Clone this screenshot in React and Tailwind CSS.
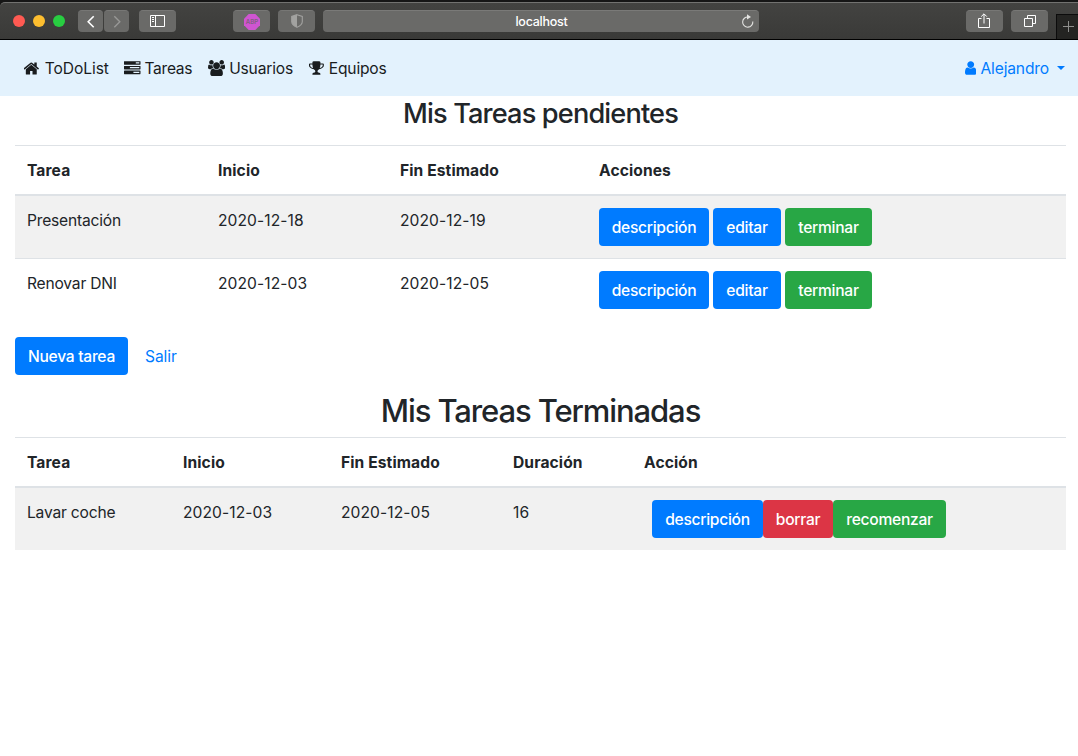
const ICONS = {
  home: ["64 0 1664 1792", "M1408 992v480q0 26-19 45t-45 19h-384v-384h-256v384h-384q-26 0-45-19t-19-45v-480q0-1 .5-3t.5-3l575-474 575 474q1 2 1 6zm223-69l-62 74q-8 9-21 11h-3q-13 0-21-7l-692-577-692 577q-12 8-24 7-13-2-21-11l-62-74q-8-10-7-23.5t11-21.5l719-599q32-26 76-26t76 26l244 204v-195q0-14 9-23t23-9h192q14 0 23 9t9 23v408l219 182q10 8 11 21.5t-7 23.5z"],
  tasks: ["0 0 1792 1792", "M1024 1408h640v-128h-640v128zm-384-512h1024v-128h-1024v128zm640-512h384v-128h-384v128zm512 832v256q0 26-19 45t-45 19h-1664q-26 0-45-19t-19-45v-256q0-26 19-45t45-19h1664q26 0 45 19t19 45zm0-512v256q0 26-19 45t-45 19h-1664q-26 0-45-19t-19-45v-256q0-26 19-45t45-19h1664q26 0 45 19t19 45zm0-512v256q0 26-19 45t-45 19h-1664q-26 0-45-19t-19-45v-256q0-26 19-45t45-19h1664q26 0 45 19t19 45z"],
  users: ["64 0 1920 1792", "M657 896q-162 5-265 128h-134q-82 0-138-40.5t-56-118.5q0-353 124-353 6 0 43.5 21t97.5 42.5 119 21.5q67 0 133-23-5 37-5 66 0 139 81 256zm1071 637q0 120-73 189.5t-194 69.5h-874q-121 0-194-69.5t-73-189.5q0-53 3.5-103.5t14-109 26.5-108.5 43-97.5 62-81 85.5-53.5 111.5-20q10 0 43 21.5t73 48 107 48 135 21.5 135-21.5 107-48 73-48 43-21.5q61 0 111.5 20t85.5 53.5 62 81 43 97.5 26.5 108.5 14 109 3.5 103.5zm-1024-1277q0 106-75 181t-181 75-181-75-75-181 75-181 181-75 181 75 75 181zm704 384q0 159-112.5 271.5t-271.5 112.5-271.5-112.5-112.5-271.5 112.5-271.5 271.5-112.5 271.5 112.5 112.5 271.5zm576 225q0 78-56 118.5t-138 40.5h-134q-103-123-265-128 81-117 81-256 0-29-5-66 66 23 133 23 59 0 119-21.5t97.5-42.5 43.5-21q124 0 124 353zm-128-609q0 106-75 181t-181 75-181-75-75-181 75-181 181-75 181 75 75 181z"],
  trophy: ["64 0 1664 1792", "M522 883q-74-162-74-371h-256v96q0 78 94.5 162t235.5 113zm1078-275v-96h-256q0 209-74 371 141-29 235.5-113t94.5-162zm128-128v128q0 71-41.5 143t-112 130-173 97.5-215.5 44.5q-42 54-95 95-38 34-52.5 72.5t-14.5 89.5q0 54 30.5 91t97.5 37q75 0 133.5 45.5t58.5 114.5v64q0 14-9 23t-23 9h-832q-14 0-23-9t-9-23v-64q0-69 58.5-114.5t133.5-45.5q67 0 97.5-37t30.5-91q0-51-14.5-89.5t-52.5-72.5q-53-41-95-95-113-5-215.5-44.5t-173-97.5-112-130-41.5-143v-128q0-40 28-68t68-28h288v-96q0-66 47-113t113-47h576q66 0 113 47t47 113v96h288q40 0 68 28t28 68z"],
  user: ["256 0 1280 1792", "M1536 1399q0 109-62.5 187t-150.5 78h-854q-88 0-150.5-78t-62.5-187q0-85 8.5-160.5t31.5-152 58.5-131 94-89 134.5-34.5q131 128 313 128t313-128q76 0 134.5 34.5t94 89 58.5 131 31.5 152 8.5 160.5zm-256-887q0 159-112.5 271.5t-271.5 112.5-271.5-112.5-112.5-271.5 112.5-271.5 271.5-112.5 271.5 112.5 112.5 271.5z"],
};

function Icon({ name, className = "h-[16.5px]" }) {
  const [box, d] = ICONS[name];
  return (
    <svg viewBox={box} className={`w-auto shrink-0 ${className}`} fill="currentColor">
      <path d={d} />
    </svg>
  );
}

function ChromeButton({ className = "", children }) {
  return (
    <div className={`flex h-[22px] items-center justify-center rounded-[4px] border-t border-[#777775] bg-[#6a6a68] ${className}`}>
      {children}
    </div>
  );
}

function BrowserBar() {
  return (
    <div className="h-10 border-b border-black bg-[#161616] pt-[2px]">
      <div className="flex h-[37px] items-start rounded-tl-[5px] border-t border-[#727270] bg-linear-to-b from-[#434341] to-[#3a3a38] pt-[7px]">
        <div className="mt-[5px] ml-[13px] flex gap-2">
          <div className="size-3 rounded-full bg-[#ff5a52]" />
          <div className="size-3 rounded-full bg-[#fdbe2f]" />
          <div className="size-3 rounded-full bg-[#28cd41]" />
        </div>
        <ChromeButton className="ml-[13px] w-[25px]">
          <svg className="h-3.5 w-2.5" viewBox="0 0 10 14" fill="none" stroke="#fff" strokeWidth="1.6"><path d="M7.7 1.2 2.2 6.7l5.5 5.5" /></svg>
        </ChromeButton>
        <ChromeButton className="ml-px w-[25px]">
          <svg className="h-3.5 w-2.5" viewBox="0 0 10 14" fill="none" stroke="#989896" strokeWidth="1.4"><path d="M2.3 1.2 7.8 6.7l-5.5 5.5" /></svg>
        </ChromeButton>
        <ChromeButton className="ml-[10px] w-[37px]">
          <svg className="mb-px h-3 w-[15px]" viewBox="0 0 15 12" fill="none" stroke="#fff"><path d="M.5.5h14v11H.5zM5.5.5v11M2 2.5h2M2 4.5h2M2 6.5h2" /></svg>
        </ChromeButton>
        <ChromeButton className="ml-[57px] w-[37px]">
          <svg className="size-4" viewBox="0 0 16 16"><path d="M4.7 0h6.6L16 4.7v6.6L11.3 16H4.7L0 11.3V4.7z" fill="#cf55d1" /><text x="8" y="10.2" textAnchor="middle" fontSize="6.2" fontFamily="Inter, sans-serif" fontWeight="600" fill="#80607f">ABP</text></svg>
        </ChromeButton>
        <ChromeButton className="ml-2 w-[37px]">
          <svg className="mb-px h-3.5 w-3" viewBox="0 0 12 14"><path d="M6 .7 11.3 2.4v5C11.3 10 9 12 6 13.3 3 12 .7 10 .7 7.4v-5z" fill="none" stroke="#a2a2a0" strokeWidth="1.1" /><path d="M6 .7v12.6C3 12 .7 10 .7 7.4v-5z" fill="#a2a2a0" /></svg>
        </ChromeButton>
        <div className="ml-2 flex h-[22px] w-[436px] items-center rounded-[4px] border-t border-[#7a7a78] bg-[#6a6a68] pr-[5px]">
          <div className="w-[19px]" />
          <div className="grow pt-[2px] text-center text-[12.5px] leading-none font-medium tracking-[-0.25px] text-white">localhost</div>
          <svg className="mb-[2px] h-3.5 w-[13px]" viewBox="0 0 13 14" fill="none" stroke="#e4e4e2" strokeWidth="1.1"><path d="M7.2 3A5.1 5.1 0 1 0 11.8 7.5" /><path d="M6 .3v5.2L10 2.9z" fill="#e4e4e2" stroke="none" /></svg>
        </div>
        <ChromeButton className="ml-[207px] w-[37px]">
          <svg className="mr-px mb-px h-4 w-3" viewBox="0 0 12 16" fill="none" stroke="#fff"><path d="M3.5 5.5h-3v9h11v-9h-3M6 1v9.5M3.2 3.6 6 .8l2.8 2.8" /></svg>
        </ChromeButton>
        <ChromeButton className="ml-2 w-[37px]">
          <svg className="mb-px size-3" viewBox="0 0 12 12" fill="none" stroke="#fff"><path d="M.5 3.5h8v8h-8zM3.5 3.5v-3h8v8h-3" /></svg>
        </ChromeButton>
        <div className="mt-[4px] ml-2 flex h-[25px] grow items-center overflow-hidden border-t border-l border-[#0c0c0c] bg-[#242422] pl-[6px]">
          <svg className="mb-px h-[11px] w-[11px] shrink-0" viewBox="0 0 11 11" stroke="#8e8e8c"><path d="M0 5.5h11M5.5 0v11" /></svg>
        </div>
      </div>
    </div>
  );
}

function Navbar() {
  return (
    <nav className="flex h-14 items-center bg-[#e3f2fd] pr-[13px] pl-6 text-[#191c1e]">
      <div className="flex w-[100px] items-center gap-1"><Icon name="home" className="h-[17px]" /><span className="ml-px pt-[2px] tracking-[-0.08px]">ToDoList</span></div>
      <div className="flex w-[84px] items-center gap-1"><Icon name="tasks" /><span className="pt-[2px] tracking-[-0.3px]">Tareas</span></div>
      <div className="flex w-[101px] items-center gap-1"><Icon name="users" className="h-4" /><span className="pt-[2px] tracking-[-0.18px]">Usuarios</span></div>
      <div className="flex items-center gap-1"><Icon name="trophy" className="h-4" /><span className="ml-px pt-[2px] tracking-[-0.2px]">Equipos</span></div>
      <div className="ml-auto flex items-center text-[#007bff]">
        <Icon name="user" className="mr-1 h-4" /><span className="pt-[2px] tracking-[-0.15px]">Alejandro</span>
        <span className="ml-2 border-x-4 border-t-4 border-x-transparent border-t-[#007bff]" />
      </div>
    </nav>
  );
}

const TONES = {
  blue: "bg-[#007bff]",
  green: "bg-[#28a745]",
  red: "bg-[#dc3545]",
};

function Button({ tone = "blue", className = "", children }) {
  return (
    <button className={`h-[38px] shrink-0 rounded-[4px] pt-[2px] text-center font-medium tracking-[-0.28px] text-white ${TONES[tone]} ${className}`}>{children}</button>
  );
}

function Table({ cols, heads, children }) {
  return (
    <table className="w-full table-fixed border-separate border-spacing-0 text-left">
      <colgroup>{cols.map((w, i) => <col key={i} className={w} />)}</colgroup>
      <thead>
        <tr>
          {heads.map((h) => <th key={h} className="h-[51px] border-t border-b-2 border-[#dee2e6] px-3 pt-[2px] pb-0 font-bold tracking-[0.1px]">{h}</th>)}
        </tr>
      </thead>
      <tbody>{children}</tbody>
    </table>
  );
}

function TextCell({ className = "", children }) {
  const tracking = /^\d/.test(children) ? "tracking-[0.08px]" : "tracking-[-0.2px]";
  return <td className={`px-3 pt-[13px] pb-3 align-top ${tracking} ${className}`}>{children}</td>;
}

const PENDING = [
  ["Presentación", "2020-12-18", "2020-12-19"],
  ["Renovar DNI", "2020-12-03", "2020-12-05"],
];

const DONE = ["Lavar coche", "2020-12-03", "2020-12-05", "16"];

export default function App() {
  return (
    <div className="h-[756px] w-[1078px] overflow-hidden bg-white font-[Inter,sans-serif] text-[15.6px] leading-6 text-[#212529]">
      <BrowserBar />
      <Navbar />
      <main className="pr-3 pl-[15px]">
        <h2 className="h-[49px] pt-px text-center text-[27.2px] leading-[34px] font-medium tracking-[-0.86px]">Mis Tareas pendientes</h2>
        <Table cols={["w-[191px]", "w-[182px]", "w-[199px]", "w-[479px]"]} heads={["Tarea", "Inicio", "Fin Estimado", "Acciones"]}>
          {PENDING.map((row, i) => {
            const line = i > 0 ? "border-t border-[#dee2e6]" : "";
            return (
              <tr key={row[0]} className={i === 0 ? "bg-[#f1f1f1]" : ""}>
                {row.map((t) => <TextCell key={t} className={line}>{t}</TextCell>)}
                <td className={`px-3 py-3 align-top ${line}`}>
                  <div className="flex gap-1">
                    <Button className="w-[110px]">descripción</Button>
                    <Button className="w-[68px]">editar</Button>
                    <Button tone="green" className="w-[87px]">terminar</Button>
                  </div>
                </td>
              </tr>
            );
          })}
        </Table>
        <div className="mt-4 flex items-center">
          <Button className="w-[113px]">Nueva tarea</Button>
          <a className="ml-[17px] pt-[2px] tracking-[-0.1px] text-[#007bff]">Salir</a>
        </div>
        <h2 className="mt-[17px] h-[45px] text-center text-[31px] leading-[38px] font-medium tracking-[-1.1px]">Mis Tareas Terminadas</h2>
        <Table cols={["w-[156px]", "w-[158px]", "w-[172px]", "w-[131px]", "w-[434px]"]} heads={["Tarea", "Inicio", "Fin Estimado", "Duración", "Acción"]}>
          <tr className="bg-[#f1f1f1]">
            {DONE.map((t) => <TextCell key={t}>{t}</TextCell>)}
            <td className="px-3 py-3 align-top">
              <div className="flex pl-2">
                <Button className="w-[111px]">descripción</Button>
                <Button tone="red" className="w-[70px]">borrar</Button>
                <Button tone="green" className="w-[113px]">recomenzar</Button>
              </div>
            </td>
          </tr>
        </Table>
      </main>
    </div>
  );
}
